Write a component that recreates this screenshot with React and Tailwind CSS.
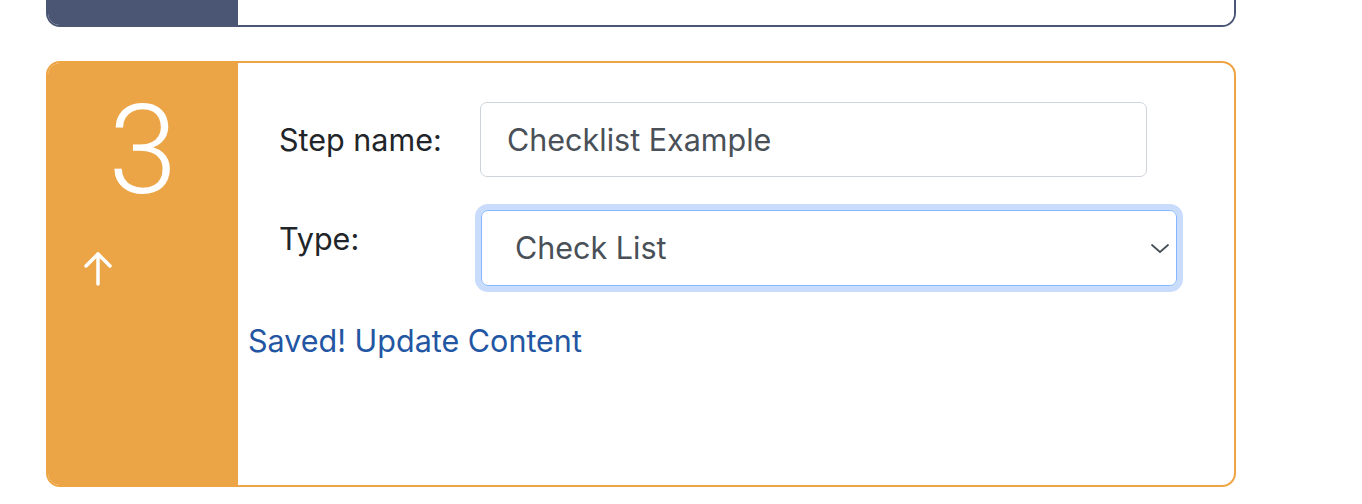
import React from 'react';

const ArrowUp = () => (
  <svg width="32" height="36" viewBox="0 0 32 36" fill="none" stroke="white" strokeWidth="3.5" strokeLinecap="round" strokeLinejoin="round">
    <polyline points="3,15 15,3 27,15" />
    <line x1="15" y1="3" x2="15" y2="33" />
  </svg>
);

const Chevron = () => (
  <svg width="20" height="11" viewBox="0 0 20 11" fill="none" stroke="#495057" strokeWidth="1.8" strokeLinecap="round" strokeLinejoin="round">
    <polyline points="2,2 10,9 18,2" />
  </svg>
);

const App = () => {
  return (
    <div className="w-full h-[504px] bg-white overflow-hidden font-['Inter',sans-serif]">
      <div className="ml-[46px] w-[1190px]">
        {/* previous step, cut off at the top */}
        <div className="h-[27px] flex border-x-2 border-b-2 border-[#4b5674] rounded-b-[14px] overflow-hidden">
          <div className="w-[190px] bg-[#4b5674]" />
          <div className="flex-1 bg-white" />
        </div>

        {/* step 3 */}
        <div className="mt-[34px] h-[426px] flex border-2 border-[#eea443] rounded-[14px] overflow-hidden">
          <div className="w-[190px] bg-[#eca546] flex flex-col">
            <div className="pt-[26px] text-center text-white text-[124px] leading-none font-light font-['Roboto',sans-serif]">3</div>
            <div className="mt-[38px] pl-[35px]">
              <ArrowUp />
            </div>
          </div>

          <div className="flex-1 pl-[10px] pt-[39px]">
            <div className="ml-[31px] flex items-center">
              <label className="w-[201px] text-[30.5px] text-[#212529]">Step name:</label>
              <div className="w-[667px] h-[75px] flex items-center px-[26px] border-[1.5px] border-[#ced4da] rounded-[7px] text-[30.5px] text-[#495057]">
                Checklist Example
              </div>
            </div>

            <div className="ml-[31px] mt-[33px] flex items-start">
              <label className="w-[202px] pt-[6px] text-[30.5px] text-[#212529]">Type:</label>
              <div className="w-[696px] h-[76px] flex items-center justify-between pl-[33px] pr-[6px] border-[1.5px] border-[#86b7fe] rounded-[7px] ring-[6px] ring-[#c9dcfc] text-[30.5px] text-[#495057]">
                <span>Check List</span>
                <Chevron />
              </div>
            </div>

            <a href="#" className="block mt-[32px] text-[30.5px] text-[#2356a2]">Saved! Update Content</a>
          </div>
        </div>
      </div>
    </div>
  );
};

export default App;
